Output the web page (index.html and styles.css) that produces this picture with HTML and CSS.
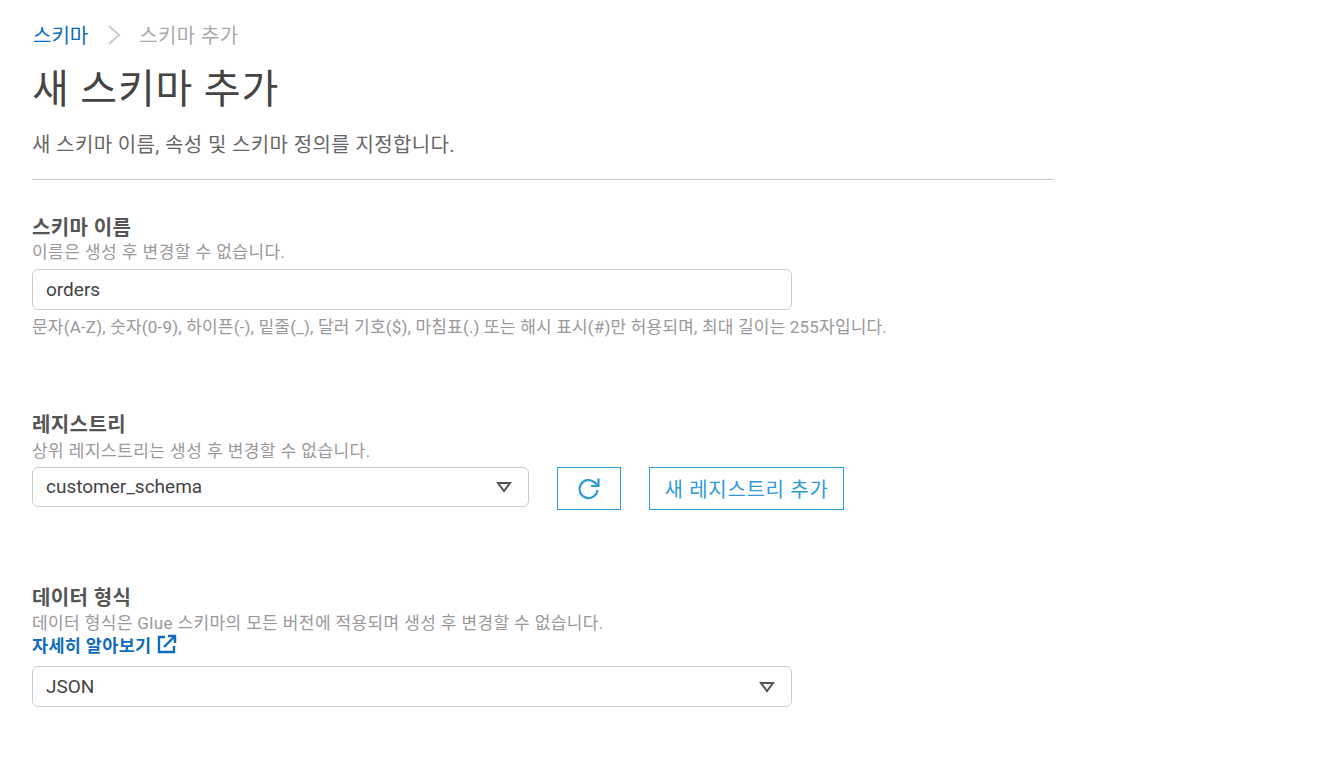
FILE: index.html
```html
<!DOCTYPE html>
<html lang="ko">
<head>
<meta charset="utf-8">
<title>새 스키마 추가</title>
<link rel="stylesheet" href="styles.css">
</head>
<body>
<main class="page">
  <nav class="crumbs">
    <a class="crumb-link" href="#">스키마</a>
    <svg class="crumb-sep" width="14" height="22" viewBox="0 0 14 22"><path d="M2 2l10 9-10 9" fill="none" stroke="#ccc" stroke-width="2"/></svg>
    <span class="crumb-current">스키마 추가</span>
  </nav>
  <h1 class="title">새 스키마 추가</h1>
  <p class="desc">새 스키마 이름, 속성 및 스키마 정의를 지정합니다.</p>
  <hr class="rule">

  <section class="field field-name">
    <div class="label">스키마 이름</div>
    <div class="hint">이름은 생성 후 변경할 수 없습니다.</div>
    <div class="control wide">orders</div>
    <div class="hint help">문자(A-Z), 숫자(0-9), 하이픈(-), 밑줄(_), 달러 기호($), 마침표(.) 또는 해시 표시(#)만 허용되며, 최대 길이는 255자입니다.</div>
  </section>

  <section class="field field-registry">
    <div class="label">레지스트리</div>
    <div class="hint">상위 레지스트리는 생성 후 변경할 수 없습니다.</div>
    <div class="row">
      <div class="control select narrow">customer_schema
        <svg class="caret" width="16" height="12" viewBox="0 0 16 12"><path d="M2 2h12l-6 8z" fill="none" stroke="#555" stroke-width="2"/></svg>
      </div>
      <button class="btn btn-icon" aria-label="새로 고침">
        <svg width="24" height="24" viewBox="0 0 24 24" fill="none" stroke="#2e9bd9" stroke-width="2.2"><path d="M20.5 13a9 9 0 1 1-3-7.7L21 8.5"/><path d="M21.5 1.5v7.5h-7.5"/></svg>
      </button>
      <button class="btn btn-text">새 레지스트리 추가</button>
    </div>
  </section>

  <section class="field field-format">
    <div class="label">데이터 형식</div>
    <div class="hint">데이터 형식은 Glue 스키마의 모든 버전에 적용되며 생성 후 변경할 수 없습니다.</div>
    <a class="learn" href="#">자세히 알아보기
      <svg width="20" height="20" viewBox="0 0 20 20" fill="none" stroke="#0f6cbd" stroke-width="2.4"><path d="M8 3H2v15h15v-6"/><path d="M7 13L18 2"/><path d="M11 2h7v7"/></svg>
    </a>
    <div class="control select wide">JSON
      <svg class="caret" width="16" height="12" viewBox="0 0 16 12"><path d="M2 2h12l-6 8z" fill="none" stroke="#555" stroke-width="2"/></svg>
    </div>
  </section>
</main>
</body>
</html>
```
FILE: styles.css
```css
* { box-sizing: border-box; }
html, body { margin: 0; background: #fff; }
body {
  font-family: Roboto, "Noto Sans CJK KR", sans-serif;
  color: #444;
}
.page { width: 1054px; padding: 21px 0 0 32px; }
.crumbs { display: flex; align-items: center; height: 26px; font-size: 20px; }
.crumb-link { color: #0f6cbd; text-decoration: none; margin-left: 1px; }
.crumb-sep { margin: 2px 18px 0 19px; }
.crumb-current { color: #aaa; letter-spacing: .4px; }
.title { margin: 18px 0 0; font-size: 40px; font-weight: 400; letter-spacing: .8px; line-height: 50px; color: #444; }
.desc { margin: 17px 0 0; font-size: 20px; letter-spacing: .38px; line-height: 26px; color: #666; }
.rule { margin: 21px 0 0; border: 0; border-top: 1px solid #ccc; }
.field-name { margin-top: 35px; }
.field-name .label { margin-bottom: -2px; }
.field-registry { margin-top: 72px; }
.field-format { margin-top: 75px; }
.label { font-size: 20px; font-weight: 700; letter-spacing: .4px; line-height: 26px; color: #555; }
.hint { font-size: 17px; letter-spacing: .45px; line-height: 26px; color: #999; }
.help { margin-top: 4px; letter-spacing: .18px; }
.control {
  display: flex; align-items: center; justify-content: space-between;
  margin-top: 4px; padding: 0 16px 0 13px; height: 41px;
  border: 1px solid #ccc; border-radius: 6px;
  font-size: 19px; color: #444; background: #fff;
}
.wide { width: 760px; }
.narrow { width: 497px; height: 40px; margin-top: 0; padding-bottom: 1px; }
.row { display: flex; align-items: flex-start; gap: 28px; margin-top: 3px; }
.btn {
  height: 43px; background: #fff; border: 1px solid #2e9bd9;
  color: #2e9bd9; font: inherit; font-size: 20px; letter-spacing: .7px; padding: 0;
  display: flex; align-items: center; justify-content: center;
}
.btn-icon { width: 64px; }
.btn-text { width: 195px; }
.field-format .hint { line-height: 24px; letter-spacing: .38px; }
.learn {
  display: flex; align-items: center; gap: 6px; height: 18px;
  font-size: 17.5px; font-weight: 700; letter-spacing: .3px; color: #0f6cbd; text-decoration: none;
}
.field-format .control { margin-top: 13px; }
```
